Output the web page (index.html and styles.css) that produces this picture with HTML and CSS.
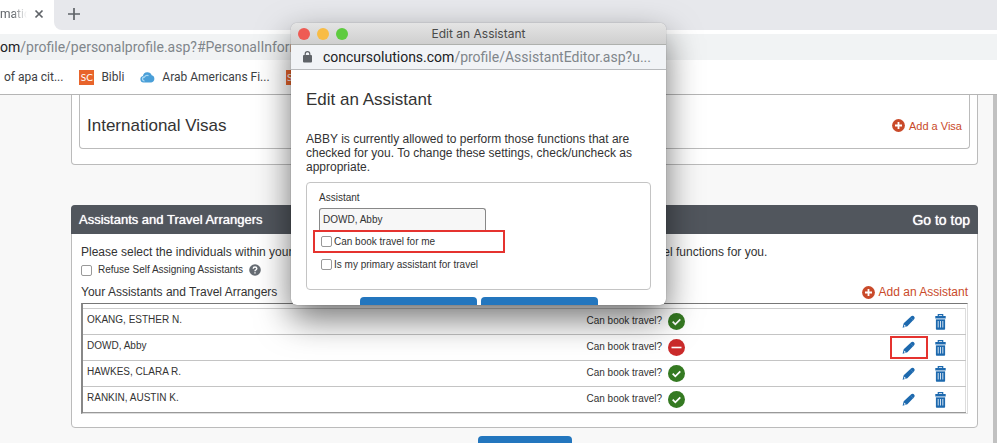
FILE: index.html
```html
<!DOCTYPE html>
<html lang="en">
<head>
  <meta charset="UTF-8" />
  <meta name="viewport" content="width=device-width, initial-scale=1.0" />
  <title>Profile - Personal Information</title>
  <link rel="stylesheet" href="styles.css">
</head>
<body>
  <!-- shared icons -->
  <svg class="defs" aria-hidden="true">
    <symbol id="plus" viewBox="0 0 13 13">
      <circle cx="6.5" cy="6.5" r="6.4" fill="#c94a2a" />
      <path d="M6.5 3v7M3 6.500h7" stroke="#fff" stroke-width="1.800" />
    </symbol>
    <symbol id="yes" viewBox="0 0 17 17">
      <circle cx="8.5" cy="8.5" r="8.5" fill="#357a22" />
      <path d="M4.700 8.700l2.600 2.600 5-5" fill="none" stroke="#fff" stroke-width="1.800" />
    </symbol>
    <symbol id="no" viewBox="0 0 17 17">
      <circle cx="8.5" cy="8.5" r="8.5" fill="#cb2b2b" />
      <path d="M3.500 8.500h10" stroke="#fff" stroke-width="1.600" />
    </symbol>
    <symbol id="pencil" viewBox="0 0 13 13">
      <path d="M9.200 1.300Q10.300 .2 11.600 1.100Q13.300 2.500 12.300 3.900L5.400 11.200L.6 12.700L1.700 8.300z" fill="#1d69ae" />
      <path d="M2.400 9.700L4 11.200L2.300 11.700L1.900 11.300z" fill="#fff" />
      <path d="M8.300 2.300l3 3" stroke="#6ea0cd" stroke-width=".4" />
    </symbol>
    <symbol id="trash" viewBox="0 0 11 16">
      <path d="M3.300 2V.6h4.400V2" fill="none" stroke="#1d69ae" stroke-width="1.200" />
      <path d="M.3 2h10.400v2.600H.3zM.9 5.300h9.200V15q0 .8-.8.8H1.700q-.8 0-.8-.8z" fill="#1d69ae" />
      <path d="M3.200 7v6.500M5.500 7v6.500M7.800 7v6.500" stroke="#fff" stroke-width=".8" />
      <path d="M.9 4.900h9.200" stroke="#a5c3df" stroke-width=".8" />
    </symbol>
  </svg>

  <header class="browser">
    <div class="tabs">
      <div class="tab">
        <span class="tab-title">matic</span>
        <button class="tab-btn" aria-label="Close tab">
          <svg width="10" height="10" viewBox="0 0 10 10"><path d="M1.500 1.500l7 7M8.500 1.500l-7 7" stroke="#5f6368" stroke-width="1.700" /></svg>
        </button>
      </div>
      <div class="strip">
        <button class="tab-btn" aria-label="New tab">
          <svg width="12" height="12" viewBox="0 0 12 12"><path d="M6 0v12M0 6h12" stroke="#5f6368" stroke-width="1.700" /></svg>
        </button>
      </div>
    </div>
    <div class="address"><span class="host">om</span>/profile/personalprofile.asp?#PersonalInformation</div>
    <nav class="bookmarks">
      <a href="#">of apa cit...</a>
      <a href="#"><span class="sc">SC</span>Bibli</a>
      <a href="#">
        <svg width="15" height="12" viewBox="0 0 15 12">
          <path d="M3.500 11.500a3.300 3.300 0 0 1-.6-6.500A4.600 4.600 0 0 1 11.700 4.300a3.700 3.700 0 0 1-.4 7.200z" fill="#4a9fd8" />
          <path d="M4.500 10a2 2 0 0 1 0-4q1.500-2.500 4-1.300" fill="none" stroke="#a9d8f3" stroke-width="1.300" />
        </svg>Arab Americans Fi...</a>
      <a href="#"><span class="sc">SC</span>Scopus</a>
    </nav>
  </header>

  <div class="viewport">
    <main class="page">
      <section class="card visas">
        <div class="visa-box">
          <h2>International Visas</h2>
          <a class="add small" href="#"><svg width="13" height="13"><use href="#plus" /></svg>Add a Visa</a>
        </div>
      </section>

      <section class="card">
        <div class="card-head">
          <h3>Assistants and Travel Arrangers</h3>
          <a href="#">Go to top</a>
        </div>
        <div class="card-body">
          <p>Please select the individuals within your company that you would like to give permission to perform online travel functions for you.</p>
          <div class="refuse">
            <input type="checkbox" id="refuse">
            <label for="refuse">Refuse Self Assigning Assistants</label>
            <svg width="12" height="12" viewBox="0 0 12 12">
              <circle cx="6" cy="6" r="5.800" fill="#666c73" />
              <path d="M4.200 4.700Q4.200 3 6 3T7.800 4.600Q7.800 5.400 6.900 5.900Q6 6.300 6 7.300M6 8.200v1.400" fill="none" stroke="#fff" stroke-width="1.400" />
            </svg>
          </div>
          <div class="list-head">
            <h4>Your Assistants and Travel Arrangers</h4>
            <a class="add" href="#"><svg width="13" height="13"><use href="#plus" /></svg>Add an Assistant</a>
          </div>
          <div class="list">
            <table>
              <tr>
                <td>OKANG, ESTHER N.</td>
                <td class="book"><div><span>Can book travel?</span><svg width="17" height="17"><use href="#yes" /></svg></div></td>
                <td class="edit"><button aria-label="Edit"><svg width="13" height="13"><use href="#pencil" /></svg></button></td>
                <td class="delete"><button aria-label="Delete"><svg width="11" height="16"><use href="#trash" /></svg></button></td>
              </tr>
              <tr>
                <td>DOWD, Abby</td>
                <td class="book"><div><span>Can book travel?</span><svg width="17" height="17"><use href="#no" /></svg></div></td>
                <td class="edit marked"><button aria-label="Edit"><svg width="13" height="13"><use href="#pencil" /></svg></button></td>
                <td class="delete"><button aria-label="Delete"><svg width="11" height="16"><use href="#trash" /></svg></button></td>
              </tr>
              <tr>
                <td>HAWKES, CLARA R.</td>
                <td class="book"><div><span>Can book travel?</span><svg width="17" height="17"><use href="#yes" /></svg></div></td>
                <td class="edit"><button aria-label="Edit"><svg width="13" height="13"><use href="#pencil" /></svg></button></td>
                <td class="delete"><button aria-label="Delete"><svg width="11" height="16"><use href="#trash" /></svg></button></td>
              </tr>
              <tr>
                <td>RANKIN, AUSTIN K.</td>
                <td class="book"><div><span>Can book travel?</span><svg width="17" height="17"><use href="#yes" /></svg></div></td>
                <td class="edit"><button aria-label="Edit"><svg width="13" height="13"><use href="#pencil" /></svg></button></td>
                <td class="delete"><button aria-label="Delete"><svg width="11" height="16"><use href="#trash" /></svg></button></td>
              </tr>
            </table>
          </div>
        </div>
      </section>

      <button class="btn page-save" aria-label="Save"></button>
    </main>
    <div class="scrollbar"></div>
  </div>

  <div class="popup" role="dialog" aria-label="Edit an Assistant">
    <div class="titlebar">
      <div class="lights"><i class="red"></i><i class="yellow"></i><i class="green"></i></div>
      <span>Edit an Assistant</span>
    </div>
    <div class="popup-url">
      <svg width="9" height="12" viewBox="0 0 9 12">
        <rect y="4" width="9" height="7.500" rx="1" fill="#5f6368" />
        <path d="M2.200 4.500V3a2.300 2.300 0 0 1 4.600 0v1.500" fill="none" stroke="#5f6368" stroke-width="1.200" />
      </svg>
      <div><span class="host">concursolutions.com</span>/profile/AssistantEditor.asp?u...</div>
    </div>
    <div class="popup-body">
      <h1>Edit an Assistant</h1>
      <p>ABBY is currently allowed to perform those functions that are checked for you. To change these settings, check/uncheck as appropriate.</p>
      <form class="assistant">
        <label class="name-label" for="assistant">Assistant</label>
        <input class="name" type="text" id="assistant" value="DOWD, Abby">
        <div class="option marked">
          <input type="checkbox" id="can-book">
          <label for="can-book">Can book travel for me</label>
        </div>
        <div class="option">
          <input type="checkbox" id="primary">
          <label for="primary">Is my primary assistant for travel</label>
        </div>
      </form>
      <div class="popup-buttons">
        <button class="btn" aria-label="Save"></button>
        <button class="btn" aria-label="Cancel"></button>
      </div>
    </div>
  </div>
</body>
</html>
```

FILE: styles.css
```css
* {
  box-sizing: border-box;
}
body {
  margin: 0;
  height: 100vh;
  overflow: hidden;
  display: flex;
  flex-direction: column;
  position: relative;
  background: #f8f8f8;
  color: #333;
  font: 12px/16px "Liberation Sans", Arial, sans-serif;
}
h1, h2, h3, h4, p {
  margin: 0;
  font-weight: normal;
}
a {
  color: inherit;
  text-decoration: none;
}
svg {
  display: block;
  flex: none;
}
button {
  padding: 0;
  border: none;
  background: none;
  cursor: pointer;
}
input[type="checkbox"] {
  appearance: none;
  flex: none;
  width: 11px;
  height: 11px;
  margin: 0;
  border: 1px solid #999;
  border-radius: 2px;
  background: #fff;
}
.defs {
  position: absolute;
  width: 0;
  height: 0;
}

/* browser window */
.browser {
  flex: none;
  background: #fff;
  border-bottom: 1px solid #b5b5b5;
  font-family: Roboto, sans-serif;
}
.tabs {
  display: flex;
  height: 30px;
}
.tab {
  display: flex;
  align-items: center;
  gap: 4px;
  width: 54px;
  padding-bottom: 2px;
}
.tab-title {
  color: #5f6368;
  -webkit-mask-image: linear-gradient(to right, #000 40%, transparent 90%);
  mask-image: linear-gradient(to right, #000 40%, transparent 90%);
}
.strip {
  display: flex;
  align-items: center;
  flex: 1;
  padding: 0 14px 2px;
  border-bottom-left-radius: 8px;
  background: #e7e8ec;
}
.address {
  height: 26px;
  margin-top: 4px;
  overflow: hidden;
  white-space: nowrap;
  background: #f1f3f4;
  color: #80868b;
  font-size: 14px;
  line-height: 26px;
}
.host {
  color: #202124;
}
.bookmarks {
  display: flex;
  align-items: center;
  gap: 16px;
  height: 34px;
  padding-left: 4px;
  color: #3c4043;
  white-space: nowrap;
}
.bookmarks a {
  display: flex;
  align-items: center;
  gap: 7px;
}
.sc {
  width: 15px;
  height: 15px;
  background: #e8642b;
  color: #fff;
  font: 10px/15px Lato, sans-serif;
  text-align: center;
}

/* profile page */
.viewport {
  display: flex;
  flex: 1;
  min-height: 0;
}
.scrollbar {
  width: 4px;
  background: #c1c1c1;
}
.page {
  flex: 1;
  padding: 0 15px 0 71px;
}
.card {
  border: 1px solid #bbb;
  border-radius: 4px;
  background: #fff;
}
.visas {
  margin-bottom: 40px;
  padding: 0 7px 15px;
  border-top: none;
  border-radius: 0 0 4px 4px;
}
.visa-box {
  display: flex;
  align-items: center;
  justify-content: space-between;
  height: 54px;
  padding: 8px 7px 0;
  border: 1px solid #bbb;
  border-top: none;
  border-radius: 0 0 4px 4px;
}
h1, h2 {
  font-size: 17px;
  line-height: 20px;
}
.add {
  display: flex;
  align-items: center;
  gap: 4px;
  color: #c94a2a;
}
.small {
  font-size: 11px;
}
.card-head {
  display: flex;
  align-items: center;
  justify-content: space-between;
  height: 29px;
  margin: -1px -1px 0;
  padding: 0 8px;
  border-radius: 4px 4px 0 0;
  background: #51565d;
  color: #fff;
  text-shadow: 0 0 1px #fff;
}
.card-head h3 {
  font-size: 13px;
}
.card-head a {
  font-size: 14px;
}
.card-body {
  padding: 10px 9px 13px;
}
.refuse {
  display: flex;
  align-items: center;
  gap: 6px;
  height: 20px;
  font-size: 10px;
}
.list-head {
  display: flex;
  justify-content: space-between;
  padding: 4px 0 3px;
}
.list {
  padding: 4px 1px 0 0;
  border: 1px solid #ddd;
  border-top-color: #777;
  border-left: 2px solid #888;
}
table {
  width: 100%;
  border-collapse: collapse;
  border-top: 1px solid #ccc;
  border-right: 1px solid #ddd;
  font-size: 10px;
}
tr {
  height: 26px;
  border-bottom: 1px solid #c4c4c4;
}
tr:last-child {
  border-bottom-color: #999;
}
td {
  padding: 0 4px 4px;
}
.book {
  width: 303px;
  padding: 0;
}
.book div {
  display: flex;
  align-items: center;
  gap: 6px;
}
.book span {
  padding-bottom: 2px;
}
.edit {
  position: relative;
  width: 38px;
  padding: 0;
}
.edit button, .delete button {
  display: flex;
  justify-content: center;
  width: 100%;
}
.edit.marked::after {
  content: "";
  position: absolute;
  inset: 1px 0;
  border: 2px solid #e5332f;
  pointer-events: none;
}
.delete {
  width: 38px;
  padding: 0 12px 0 0;
}
.btn {
  height: 26px;
  border-radius: 4px;
  background: #2376be;
}
.page-save {
  display: block;
  width: 94px;
  margin: 8px auto 0;
}

/* assistant editor window */
.popup {
  position: absolute;
  top: 23px;
  left: 291px;
  width: 375px;
  height: 282px;
  overflow: hidden;
  border-radius: 6px;
  background: #fff;
  box-shadow: 0 0 1px rgba(0, 0, 0, .5), 0 14px 34px rgba(0, 0, 0, .55);
}
.titlebar {
  display: grid;
  grid-template-columns: 1fr auto 1fr;
  align-items: center;
  height: 22px;
  padding: 0 7px;
  border-bottom: 1px solid #aeb0ad;
  background: linear-gradient(#e4e4e4, #cfcfcf);
  color: #4a4a4a;
  font: 12px/16px Inter, sans-serif;
}
.lights {
  display: flex;
  gap: 7px;
}
.lights i {
  width: 12px;
  height: 12px;
  border-radius: 50%;
}
.red {
  background: #ee5b54;
}
.yellow {
  background: #f8bc45;
}
.green {
  background: #5ecb3f;
}
.popup-url {
  display: flex;
  align-items: center;
  gap: 11px;
  height: 25px;
  padding: 0 12px;
  border-bottom: 1px solid #b8babd;
  background: #f1f3f6;
  color: #80868b;
  font: 14px/16px Roboto, sans-serif;
  white-space: nowrap;
}
.popup-body {
  padding: 20px 15px 0;
}
.popup-body p {
  margin: 22px 0 8px;
  line-height: 14px;
}
.assistant {
  display: flex;
  flex-direction: column;
  height: 108px;
  padding: 7px 6px;
  border: 1px solid #c4c4c4;
  border-radius: 4px;
  font-size: 10px;
}
.name-label {
  margin-left: 6px;
}
.name {
  width: 167px;
  height: 22px;
  margin: 2px 6px 0;
  padding: 0 3px;
  border: 1px solid #888;
  border-bottom: none;
  border-radius: 3px 3px 0 0;
  background: #f7f7f7;
  color: #333;
  font: inherit;
}
.option {
  display: flex;
  align-items: center;
  gap: 2px;
  width: 192px;
  height: 23px;
  padding: 0 8px;
}
.option.marked {
  padding: 0 6px;
  border: 2px solid #e5332f;
}
.popup-buttons {
  display: flex;
  justify-content: center;
  gap: 4px;
  margin-top: 7px;
}
.popup-buttons .btn {
  width: 117px;
}
```
